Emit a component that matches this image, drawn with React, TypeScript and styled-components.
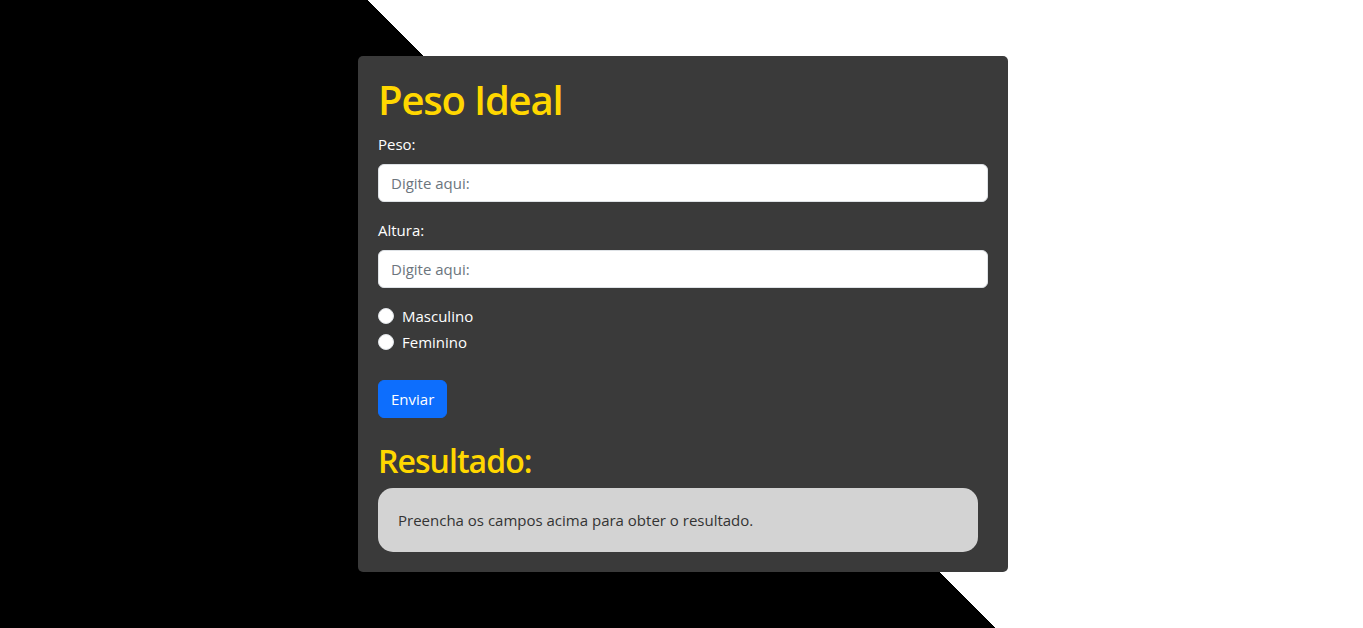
import React from 'react';
import styled, { createGlobalStyle } from 'styled-components';

const GlobalStyle = createGlobalStyle`
  *, *::before, *::after {
    box-sizing: border-box;
  }
  body {
    margin: 0;
    font-family: "Segoe UI", "Open Sans", "Noto Sans", sans-serif;
    font-size: 15px;
    line-height: 24px;
  }
`;

const Page = styled.main`
  min-height: 100vh;
  display: flex;
  align-items: center;
  justify-content: center;
  padding-left: 3px;
  background: linear-gradient(45deg, #000 50%, #fff 50%);
`;

const Card = styled.form`
  width: 650px;
  padding: 20px;
  background: #3a3a3a;
  border-radius: 5px;
  color: #fff;
`;

const Heading = styled.h1<{ $size: number; $top: number }>`
  margin: ${(p) => p.$top}px 0 8px;
  font-size: ${(p) => p.$size}px;
  font-weight: 600;
  line-height: 1.2;
  letter-spacing: -0.03em;
  color: #ffd700;
`;

const Field = styled.div`
  margin-bottom: 16px;
`;

const Label = styled.label`
  display: block;
  margin-bottom: 8px;
`;

const Input = styled.input`
  display: block;
  width: 100%;
  height: 38px;
  padding: 6px 12px;
  font: inherit;
  color: #212529;
  background: #fff;
  border: 1px solid #dee2e6;
  border-radius: 6px;
  outline: none;

  &::placeholder {
    color: #6c757d;
  }
`;

const Options = styled.div`
  margin-bottom: 26px;
`;

const Check = styled.div`
  display: flex;
  align-items: center;
  gap: 8px;
  min-height: 24px;
  margin-bottom: 2px;
`;

const Radio = styled.input`
  appearance: none;
  width: 16px;
  height: 16px;
  margin: 0;
  border-radius: 50%;
  background: #fff;
  border: 1px solid #dee2e6;
`;

const Button = styled.button`
  display: block;
  height: 38px;
  padding: 6px 12px;
  font: inherit;
  color: #fff;
  background: #0d6efd;
  border: 1px solid #0d6efd;
  border-radius: 6px;
`;

const Result = styled.div`
  width: 600px;
  padding: 20px;
  background: #d3d3d3;
  border-radius: 15px;
  color: #333;
`;

export default function App() {
  return (
    <>
      <GlobalStyle />
      <Page>
        <Card onSubmit={(e) => e.preventDefault()}>
          <Heading $size={40} $top={0}>Peso Ideal</Heading>
          <Field>
            <Label htmlFor="peso">Peso:</Label>
            <Input id="peso" type="text" placeholder="Digite aqui:" />
          </Field>
          <Field>
            <Label htmlFor="altura">Altura:</Label>
            <Input id="altura" type="text" placeholder="Digite aqui:" />
          </Field>
          <Options>
            <Check>
              <Radio type="radio" name="sexo" id="masculino" />
              <label htmlFor="masculino">Masculino</label>
            </Check>
            <Check>
              <Radio type="radio" name="sexo" id="feminino" />
              <label htmlFor="feminino">Feminino</label>
            </Check>
          </Options>
          <Button type="submit">Enviar</Button>
          <Heading as="h2" $size={32} $top={24}>Resultado:</Heading>
          <Result>Preencha os campos acima para obter o resultado.</Result>
        </Card>
      </Page>
    </>
  );
}
